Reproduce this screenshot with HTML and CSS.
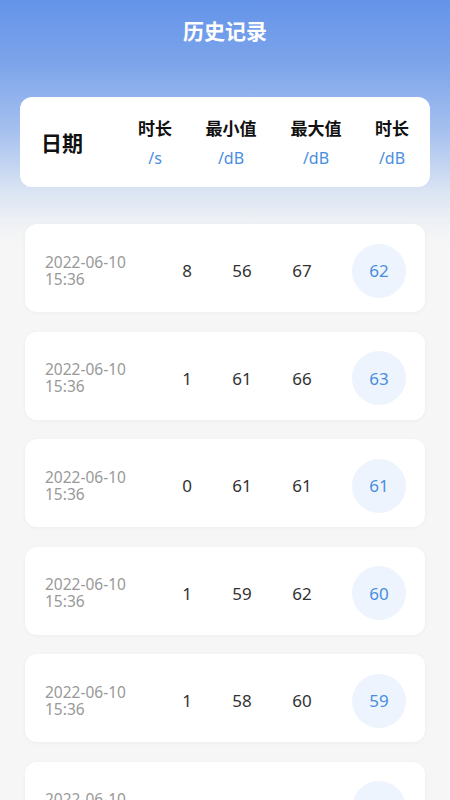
FILE: index.html
```html
<!DOCTYPE html>
<html lang="zh">
<head>
<meta charset="utf-8">
<link rel="stylesheet" href="styles.css">
</head>
<body>
<div class="page">
  <div class="title">历史记录</div>
  <div class="head-card">
    <div class="hc date-h">日期</div>
    <div class="hc c2"><span class="lbl">时长</span><span class="unit">/s</span></div>
    <div class="hc c3"><span class="lbl">最小值</span><span class="unit">/dB</span></div>
    <div class="hc c4"><span class="lbl">最大值</span><span class="unit">/dB</span></div>
    <div class="hc c5"><span class="lbl">时长</span><span class="unit">/dB</span></div>
  </div>
  <div class="list">
    <div class="row"><div class="date">2022-06-10<br>15:36</div><div class="n c2">8</div><div class="n c3">56</div><div class="n c4">67</div><div class="c5"><span class="avg">62</span></div></div>
    <div class="row"><div class="date">2022-06-10<br>15:36</div><div class="n c2">1</div><div class="n c3">61</div><div class="n c4">66</div><div class="c5"><span class="avg">63</span></div></div>
    <div class="row"><div class="date">2022-06-10<br>15:36</div><div class="n c2">0</div><div class="n c3">61</div><div class="n c4">61</div><div class="c5"><span class="avg">61</span></div></div>
    <div class="row"><div class="date">2022-06-10<br>15:36</div><div class="n c2">1</div><div class="n c3">59</div><div class="n c4">62</div><div class="c5"><span class="avg">60</span></div></div>
    <div class="row"><div class="date">2022-06-10<br>15:36</div><div class="n c2">1</div><div class="n c3">58</div><div class="n c4">60</div><div class="c5"><span class="avg">59</span></div></div>
    <div class="row"><div class="date">2022-06-10<br>15:36</div><div class="n c2">1</div><div class="n c3">58</div><div class="n c4">60</div><div class="c5"><span class="avg">59</span></div></div>
  </div>
</div>
</body>
</html>
```
FILE: styles.css
```css
html, body {
  margin: 0;
  padding: 0;
}
body {
  width: 450px;
  height: 800px;
  overflow: hidden;
  background: #f6f6f6;
  font-family: "Noto Sans", "Noto Sans CJK SC", sans-serif;
}
.page {
  min-height: 800px;
  background: linear-gradient(180deg, #6494e9 0px, #7ba3ea 60px, #a5c0ef 130px, #d9e3f3 190px, #eef1f5 220px, #f6f6f6 245px, #f6f6f6 100%);
}
.title {
  height: 60px;
  line-height: 60px;
  text-align: center;
  color: #fff;
  font-size: 21px;
  font-weight: 700;
  font-family: "Noto Sans CJK SC", sans-serif;
}
.head-card {
  margin: 37px 20px 0 20px;
  height: 90px;
  background: #fff;
  border-radius: 12px;
  display: flex;
  align-items: center;
  padding-left: 21px;
  box-sizing: border-box;
  font-family: "Noto Sans CJK SC", sans-serif;
}
.head-card > .hc {
  flex-shrink: 0;
}
.head-card .date-h {
  width: 94px;
  font-size: 21px;
  font-weight: 700;
  color: #111;
}
.head-card .hc:not(.date-h) {
  display: flex;
  flex-direction: column;
  align-items: center;
  gap: 7px;
}
.head-card .c2 { width: 40px; }
.head-card .c3 { width: 112px; }
.head-card .c4 { width: 58px; }
.head-card .c5 { width: 94px; }
.lbl {
  font-size: 17px;
  font-weight: 700;
  color: #111;
  line-height: 24px;
}
.unit {
  font-size: 16px;
  color: #4a8ee0;
  line-height: 22px;
  font-family: "Noto Sans", sans-serif;
}
.list {
  margin-top: 37px;
  padding: 0 25px;
  display: flex;
  flex-direction: column;
  gap: 19.6px;
}
.row {
  height: 88px;
  background: #fff;
  border-radius: 12px;
  box-shadow: 0 1px 4px rgba(0,0,0,0.04);
  display: flex;
  align-items: center;
  padding: 5px 0 0 20px;
  box-sizing: border-box;
  flex-shrink: 0;
}
.row > div {
  flex-shrink: 0;
}
.row .date {
  width: 122px;
  font-size: 15.5px;
  line-height: 17px;
  color: #999;
  margin-top: 0;
}
.row .n {
  text-align: center;
  font-size: 17px;
  color: #333;
}
.row .c2 { width: 40px; }
.row .c3 { width: 70px; }
.row .c4 { width: 50px; }
.row .c5 { width: 104px; display: flex; justify-content: center; }
.avg {
  width: 54px;
  height: 54px;
  border-radius: 50%;
  background: #eef4fd;
  color: #4a8ee0;
  font-size: 17px;
  display: flex;
  align-items: center;
  justify-content: center;
}
```
